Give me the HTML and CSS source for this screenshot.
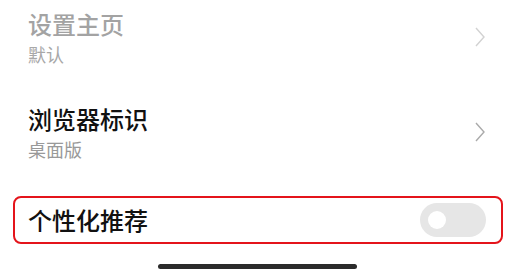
FILE: index.html
```html
<!DOCTYPE html>
<html lang="zh-CN">
<head>
    <meta charset="UTF-8">
    <meta name="viewport" content="width=device-width, initial-scale=1.0">
    <title>浏览器设置</title>
    <link rel="stylesheet" href="styles.css">
</head>
<body>
    <div class="list">
        <div class="item disabled">
            <div class="text">
                <div class="title">设置主页</div>
                <div class="sub">默认</div>
            </div>
            <svg class="arrow" width="10" height="20" viewBox="0 0 10 20">
                <polyline points="1,1 9,10 1,19" fill="none" stroke="currentColor" stroke-width="1.4"/>
            </svg>
        </div>

        <div class="item">
            <div class="text">
                <div class="title">浏览器标识</div>
                <div class="sub">桌面版</div>
            </div>
            <svg class="arrow" width="10" height="20" viewBox="0 0 10 20">
                <polyline points="1,1 9,10 1,19" fill="none" stroke="currentColor" stroke-width="1.4"/>
            </svg>
        </div>

        <div class="item switch-row">
            <div class="title">个性化推荐</div>
            <div class="switch"><span class="knob"></span></div>
        </div>
    </div>

    <div class="home-bar"></div>
</body>
</html>
```

FILE: styles.css
```css
body {
    margin: 0;
    background: #fff;
    font-family: "Noto Sans CJK SC", "Noto Sans", sans-serif;
    overflow: hidden;
}
.list {
    margin-top: -11px;
}
.item {
    display: flex;
    align-items: center;
    justify-content: space-between;
    padding: 20px 30px 19px 28px;
}
.title {
    font-size: 24px;
    line-height: 30px;
    font-weight: 500;
    color: #111;
}
.sub {
    margin-top: 4px;
    font-size: 18px;
    line-height: 22px;
    color: #999;
}
.arrow {
    color: #aaa;
}
.disabled .title {
    color: #a3a3a3;
}
.disabled .sub {
    color: #a8a8a8;
}
.disabled .arrow {
    color: #d2d2d2;
}
.switch-row {
    margin: 17px 12px 0 13px;
    padding: 5px 15px 5px 13px;
    border: 2px solid #e4141b;
    border-radius: 8px;
}
.switch {
    width: 66px;
    height: 34px;
    border-radius: 17px;
    background: #e6e6e6;
    display: flex;
    align-items: center;
    padding-left: 8px;
    box-sizing: border-box;
}
.knob {
    width: 18px;
    height: 18px;
    border-radius: 50%;
    background: #fff;
}
.home-bar {
    width: 199px;
    height: 5px;
    margin: 20px auto 0;
    border-radius: 3px;
    background: #2b2b2b;
}
```
